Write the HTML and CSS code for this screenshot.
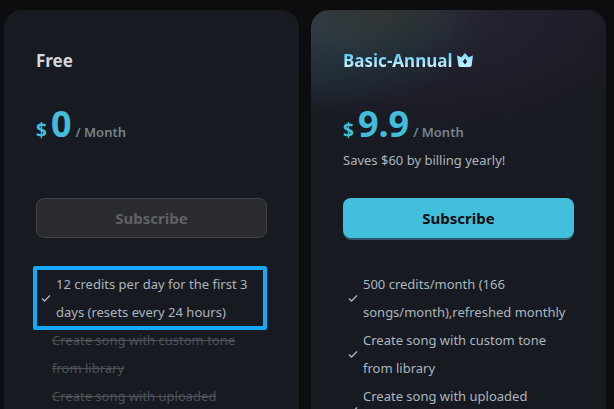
FILE: index.html
```
<!DOCTYPE html>
<html lang="en">
<head>
  <meta charset="UTF-8">
  <title>Pricing</title>
  <link rel="stylesheet" href="styles.css">
</head>
<body>
  <main class="plans">
    <section class="plan">
      <h2 class="plan-name">Free</h2>
      <div class="price"><span class="currency">$</span><span class="amount">0</span><span class="period">/ Month</span></div>
      <p class="note"></p>
      <button class="subscribe" type="button" disabled>Subscribe</button>
      <ul class="features">
        <li class="highlight">
          <svg class="check" viewBox="0 0 10 10"><path d="M1 5.5L3.5 8 9 2.5"/></svg>
          <span>12 credits per day for the first 3 days (resets every 24 hours)</span>
        </li>
        <li class="off"><span>Create song with custom tone from library</span></li>
        <li class="off"><span>Create song with uploaded custom tone</span></li>
      </ul>
    </section>

    <section class="plan featured">
      <h2 class="plan-name">
        <span class="shiny">Basic-Annual</span>
        <svg class="crown" viewBox="0 0 16 14">
          <defs>
            <linearGradient id="crown-fill" x1="0" y1="0" x2="0" y2="1">
              <stop offset="0" stop-color="#7fdcfb"/>
              <stop offset="1" stop-color="#c3f1ff"/>
            </linearGradient>
          </defs>
          <path fill="url(#crown-fill)" fill-rule="evenodd" d="M0 2.6L4.4 4.2 8 0l3.6 4.2L16 2.6 14.6 12.6q-.2 1.4-1.6 1.4H3q-1.4 0-1.6-1.4zM8 5.6L5.8 8.6 8 11.6l2.2-3z"/>
        </svg>
      </h2>
      <div class="price"><span class="currency">$</span><span class="amount">9.9</span><span class="period">/ Month</span></div>
      <p class="note">Saves $60 by billing yearly!</p>
      <button class="subscribe" type="button">Subscribe</button>
      <ul class="features">
        <li>
          <svg class="check" viewBox="0 0 10 10"><path d="M1 5.5L3.5 8 9 2.5"/></svg>
          <span>500 credits/month (166 songs/month),refreshed monthly</span>
        </li>
        <li>
          <svg class="check" viewBox="0 0 10 10"><path d="M1 5.5L3.5 8 9 2.5"/></svg>
          <span>Create song with custom tone from library</span>
        </li>
        <li>
          <svg class="check" viewBox="0 0 10 10"><path d="M1 5.5L3.5 8 9 2.5"/></svg>
          <span>Create song with uploaded custom tone</span>
        </li>
      </ul>
    </section>
  </main>
</body>
</html>
```

FILE: styles.css
```
* {
  box-sizing: border-box;
}

body {
  margin: 0;
  height: 100vh;
  overflow: hidden;
  background: #0d0d0f;
  color: #a9b6bf;
  font-family: "Noto Sans", "Open Sans", sans-serif;
  font-size: 13px;
}

.plans {
  display: grid;
  grid-template-columns: 1fr 1fr;
  gap: 12px;
  padding: 10px 8px 10px 4px;
}

.plan {
  padding: 36px 32px;
  border-radius: 18px;
  background: #181a21;
}

.featured {
  background:
    radial-gradient(ellipse 100px 50px at 70px 0, rgba(62, 58, 48, 0.5), transparent),
    radial-gradient(ellipse 170px 84px at 0 16px, #303c47, rgba(34, 48, 56, 0.9) 55%, rgba(34, 48, 56, 0)),
    radial-gradient(ellipse 240px 130px at 120px 0, #262535, rgba(38, 37, 53, 0)),
    #181a21;
}

.plan-name {
  display: flex;
  align-items: center;
  gap: 5px;
  height: 28px;
  margin: 0;
  color: #ced8de;
  font-size: 17px;
  font-weight: 700;
}

.shiny {
  background: linear-gradient(#5fd0f8 25%, #c9f0ff 75%);
  -webkit-background-clip: text;
  background-clip: text;
  color: transparent;
}

.crown {
  width: 16px;
  height: 14px;
}

.price {
  display: flex;
  align-items: baseline;
  gap: 4px;
  margin-top: 26px;
  color: #43bddc;
  font-weight: 700;
  line-height: 1;
}

.currency {
  font-size: 19px;
}

.amount {
  font-size: 36px;
  line-height: 48px;
}

.period {
  color: #74828b;
  font-size: 13px;
  font-weight: 600;
}

.note {
  height: 24px;
  margin: 0 0 26px;
  line-height: 24px;
}

.subscribe {
  display: block;
  width: 100%;
  height: 40px;
  padding: 0;
  border: 0;
  border-radius: 8px;
  background: #43bfde;
  box-shadow: 0 2px 0 #2e596a;
  color: #0d0d0f;
  font-family: inherit;
  font-size: 15px;
  font-weight: 700;
}

.subscribe:disabled {
  border: 1px solid #414143;
  background: #2a2b30;
  box-shadow: none;
  color: #606165;
}

.features {
  margin: 32px 0 0;
  padding: 0;
  list-style: none;
  line-height: 28px;
}

.features li {
  display: flex;
  align-items: center;
  gap: 5px;
  position: relative;
  padding-left: 5px;
}

.features .off {
  padding-left: 16px;
  padding-right: 20px;
  color: #4b5258;
  text-decoration: line-through;
}

.check {
  flex: none;
  width: 10px;
  height: 10px;
  fill: none;
  stroke: #a9b6bf;
  stroke-width: 1.3;
}

/* callout frame round the daily credits */
.highlight::after {
  content: "";
  position: absolute;
  inset: -4px 0 -4px -3px;
  border: 4px solid #14a9fb;
  border-radius: 2px;
}
```
